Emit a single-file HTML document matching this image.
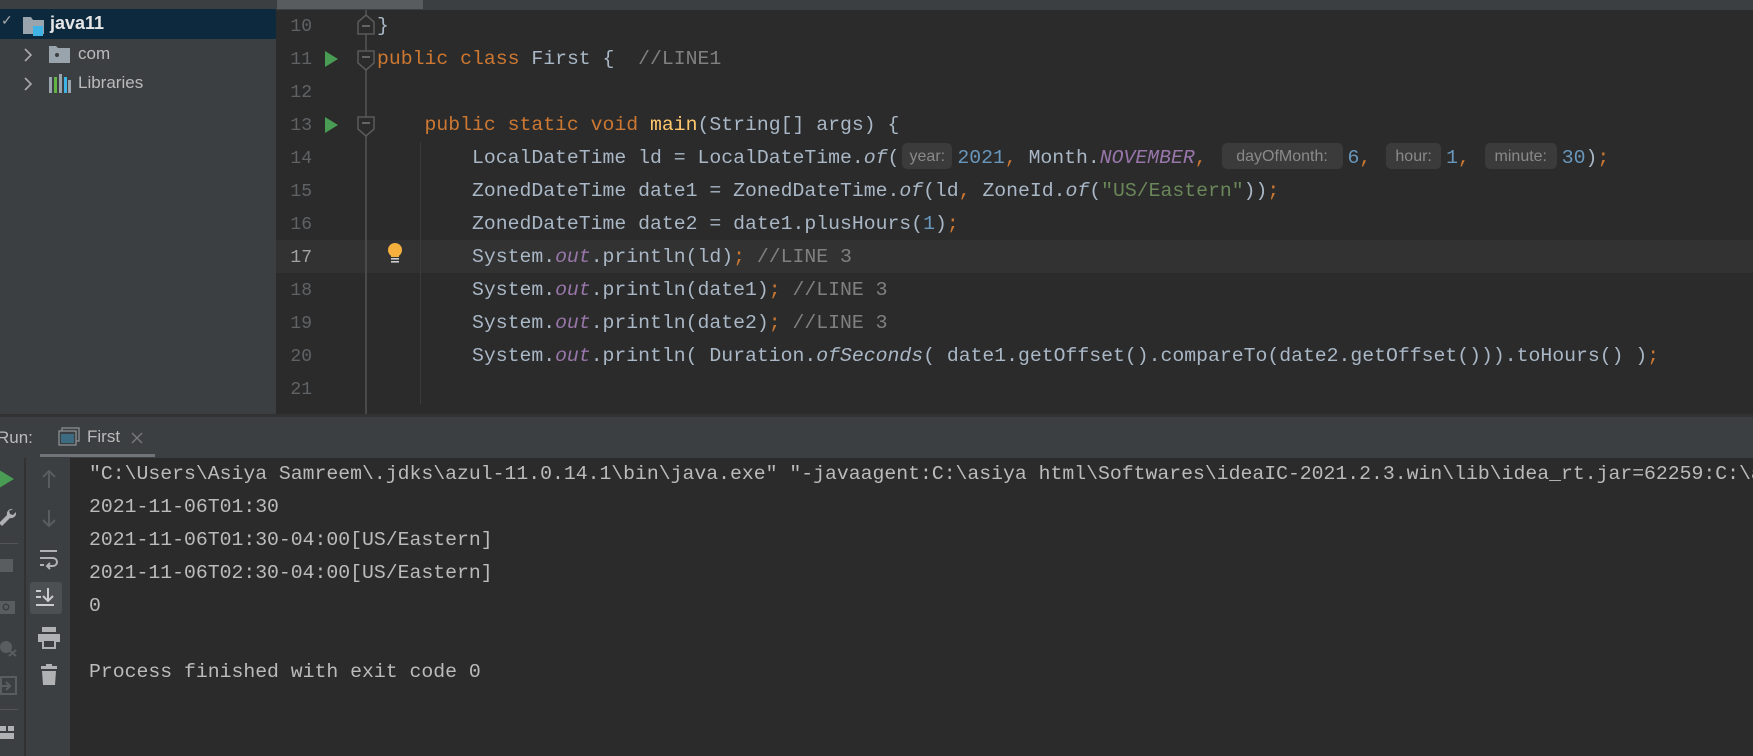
<!DOCTYPE html>
<html><head><meta charset="utf-8"><style>
*{margin:0;padding:0;box-sizing:border-box}
body{width:1753px;height:756px;overflow:hidden;background:#2b2b2b;position:relative;font-family:"Liberation Mono",monospace}
.abs{position:absolute}
.mono{font-family:"Liberation Mono",monospace;font-size:19.8px;white-space:pre;color:#a9b7c6}
.ln{position:absolute;left:276px;width:36px;text-align:right;font-size:18px;color:#606366;font-family:"Liberation Mono",monospace}
.cl{position:absolute;left:377px;height:33px;line-height:33px}
.k{color:#cc7832}.n{color:#6897bb}.s{color:#6a8759}.c{color:#808080}.f{color:#9876aa;font-style:italic}.m{color:#ffc66d}.i{font-style:italic}
.h{display:inline-block;height:26px;line-height:28px;vertical-align:middle;background:#3b3b3b;color:#8a8a8a;border-radius:5px;font-family:"Liberation Sans",sans-serif;font-size:16px;text-align:center;margin:0 5px 0 3px;position:relative;top:-2px}
.side{font-family:"Liberation Sans",sans-serif;font-size:17px;color:#bbbbbb}
</style></head><body>
<div class="abs" style="left:0;top:0;width:1753px;height:10px;background:#3c3f41"></div>
<div class="abs" style="left:277px;top:0;width:146px;height:9px;background:#595c5f"></div>
<div class="abs" style="left:0;top:10px;width:276px;height:405px;background:#3c3f41"></div>
<div class="abs" style="left:0;top:9px;width:276px;height:30px;background:#0d293e"></div>
<div class="abs side" style="left:1px;top:12px;color:#aaa;font-size:14px">✓</div>
<svg class="abs" style="left:22px;top:15px" width="24" height="22"><path d="M1 2h8l2 3h11v14H1z" fill="#9aa4ad"/><rect x="11" y="11" width="10" height="10" fill="#3fb3e6"/></svg>
<div class="abs side" style="left:50px;top:13px;font-weight:bold;color:#e6e6e6;font-size:18px">java11</div>
<svg class="abs" style="left:23px;top:48px" width="10" height="14"><path d="M2 1l6 6-6 6" stroke="#aaa" stroke-width="1.6" fill="none"/></svg>
<svg class="abs" style="left:49px;top:46px" width="22" height="17"><path d="M0 0h7l2 2h12v15H0z" fill="#9aa4ad"/><circle cx="8" cy="9" r="2" fill="#3c3f41"/></svg>
<div class="abs side" style="left:78px;top:44px">com</div>
<svg class="abs" style="left:23px;top:77px" width="10" height="14"><path d="M2 1l6 6-6 6" stroke="#aaa" stroke-width="1.6" fill="none"/></svg>
<svg class="abs" style="left:49px;top:74px" width="22" height="19"><rect x="0" y="3" width="3" height="16" fill="#9aa4ad"/><rect x="5" y="3" width="3" height="16" fill="#62b543"/><rect x="10" y="0" width="3" height="19" fill="#9aa4ad"/><rect x="15" y="3" width="3" height="16" fill="#3fb3e6"/><rect x="19" y="6" width="3" height="13" fill="#9aa4ad"/></svg>
<div class="abs side" style="left:78px;top:73px">Libraries</div>
<div class="abs" style="left:276px;top:240px;width:1477px;height:33px;background:#323232"></div>
<div class="abs" style="left:365px;top:10px;width:2px;height:405px;background:#4a4a4a"></div>
<div class="abs" style="left:420px;top:142px;width:1px;height:262px;background:#3b3b3b"></div>
<svg class="abs" style="left:357px;top:14px" width="18" height="22"><path d="M1 8l8-7 8 7v12H1z" fill="#2b2b2b" stroke="#5a5a5a" stroke-width="1.5"/><path d="M5 12h8" stroke="#777" stroke-width="1.5"/></svg>
<svg class="abs" style="left:357px;top:50px" width="18" height="22"><path d="M1 1h16v12l-8 7-8-7z" fill="#2b2b2b" stroke="#5a5a5a" stroke-width="1.5"/><path d="M5 7h8" stroke="#777" stroke-width="1.5"/></svg>
<svg class="abs" style="left:357px;top:116px" width="18" height="22"><path d="M1 1h16v12l-8 7-8-7z" fill="#2b2b2b" stroke="#5a5a5a" stroke-width="1.5"/><path d="M5 7h8" stroke="#777" stroke-width="1.5"/></svg>
<svg class="abs" style="left:325px;top:51px" width="14" height="16"><path d="M0 0l13 8-13 8z" fill="#499c54"/></svg>
<svg class="abs" style="left:325px;top:117px" width="14" height="16"><path d="M0 0l13 8-13 8z" fill="#499c54"/></svg>
<svg class="abs" style="left:387px;top:243px" width="16" height="22"><circle cx="8" cy="7" r="7" fill="#f4af3d"/><rect x="4" y="10" width="8" height="4" fill="#f4af3d"/><rect x="4" y="15" width="8" height="1.6" fill="#ccc"/><rect x="4" y="18" width="8" height="1.6" fill="#ccc"/></svg>

<div class="ln" style="top:17px">10</div>
<div class="ln" style="top:50px">11</div>
<div class="ln" style="top:83px">12</div>
<div class="ln" style="top:116px">13</div>
<div class="ln" style="top:149px">14</div>
<div class="ln" style="top:182px">15</div>
<div class="ln" style="top:215px">16</div>
<div class="ln" style="top:248px;color:#a4a3a3">17</div>
<div class="ln" style="top:281px">18</div>
<div class="ln" style="top:314px">19</div>
<div class="ln" style="top:347px">20</div>
<div class="ln" style="top:380px">21</div>

<div class="cl mono" style="top:10px">}</div>
<div class="cl mono" style="top:43px"><span class="k">public class </span>First {  <span class="c">//LINE1</span></div>
<div class="cl mono" style="top:109px">    <span class="k">public static void </span><span class="m">main</span>(String[] args) {</div>
<div class="cl mono" style="top:142px">        LocalDateTime ld = LocalDateTime.<span class="i">of</span>(<span class="h" style="width:50px">year:</span><span class="n">2021</span><span class="k">, </span>Month.<span class="f">NOVEMBER</span><span class="k">, </span><span class="h" style="width:121px">dayOfMonth:</span><span class="n">6</span><span class="k">, </span><span class="h" style="width:55px">hour:</span><span class="n">1</span><span class="k">, </span><span class="h" style="width:72px">minute:</span><span class="n">30</span>)<span class="k">;</span></div>
<div class="cl mono" style="top:175px">        ZonedDateTime date1 = ZonedDateTime.<span class="i">of</span>(ld<span class="k">, </span>ZoneId.<span class="i">of</span>(<span class="s">"US/Eastern"</span>))<span class="k">;</span></div>
<div class="cl mono" style="top:208px">        ZonedDateTime date2 = date1.plusHours(<span class="n">1</span>)<span class="k">;</span></div>
<div class="cl mono" style="top:241px">        System.<span class="f">out</span>.println(ld)<span class="k">; </span><span class="c">//LINE 3</span></div>
<div class="cl mono" style="top:274px">        System.<span class="f">out</span>.println(date1)<span class="k">; </span><span class="c">//LINE 3</span></div>
<div class="cl mono" style="top:307px">        System.<span class="f">out</span>.println(date2)<span class="k">; </span><span class="c">//LINE 3</span></div>
<div class="cl mono" style="top:340px">        System.<span class="f">out</span>.println( Duration.<span class="i">ofSeconds</span>( date1.getOffset().compareTo(date2.getOffset())).toHours() )<span class="k">;</span></div>

<div class="abs" style="left:0;top:414px;width:1753px;height:3px;background:#323232"></div>
<div class="abs" style="left:0;top:417px;width:1753px;height:41px;background:#3c3f41"></div>
<div class="abs side" style="left:-3px;top:428px">Run:</div>
<svg class="abs" style="left:58px;top:427px" width="22" height="20"><rect x="4" y="1" width="17" height="13" fill="none" stroke="#8a8f94" stroke-width="1.3"/><rect x="1" y="4" width="17" height="14" fill="#3c3f41" stroke="#8a8f94" stroke-width="1.3"/><rect x="3" y="7" width="13" height="9" fill="#3d6b82"/></svg>
<div class="abs side" style="left:87px;top:427px">First</div>
<svg class="abs" style="left:131px;top:432px" width="12" height="12"><path d="M1 1l10 10M11 1L1 11" stroke="#7a7a7a" stroke-width="1.3"/></svg>
<div class="abs" style="left:40px;top:454px;width:115px;height:3px;background:#6f737a"></div>

<div class="abs" style="left:0;top:458px;width:70px;height:298px;background:#3c3f41"></div>
<div class="abs" style="left:24px;top:458px;width:2px;height:298px;background:#323232"></div>
<svg class="abs" style="left:0;top:468px" width="14" height="22"><path d="M-4 0l18 11-18 11z" fill="#499c54"/></svg>
<svg class="abs" style="left:0;top:507px" width="16" height="20"><path d="M13 2a5 5 0 0 0-6 6l-8 8 3 3 8-8a5 5 0 0 0 6-6l-3 3-3-1-1-3z" fill="#afb1b3"/></svg>
<div class="abs" style="left:0;top:543px;width:18px;height:1px;background:#555"></div>
<div class="abs" style="left:0;top:559px;width:13px;height:13px;background:#5a5d5f"></div>
<svg class="abs" style="left:0;top:597px" width="16" height="20"><rect x="0" y="4" width="15" height="13" fill="#5a5d5f"/><circle cx="6" cy="10" r="3.5" fill="#3c3f41"/><circle cx="6" cy="10" r="2" fill="#5a5d5f"/></svg>
<svg class="abs" style="left:0;top:636px" width="18" height="22"><circle cx="6" cy="11" r="6" fill="#5a5d5f"/><path d="M9 14l7 6M16 14l-7 6" stroke="#5a5d5f" stroke-width="2"/></svg>
<svg class="abs" style="left:0;top:676px" width="18" height="20"><rect x="1" y="1" width="15" height="17" fill="none" stroke="#5a5d5f" stroke-width="2"/><path d="M0 10h9M6 6l4 4-4 4" stroke="#5a5d5f" stroke-width="2" fill="none"/></svg>
<div class="abs" style="left:0;top:709px;width:18px;height:1px;background:#555"></div>
<svg class="abs" style="left:0;top:725px" width="16" height="16"><rect x="0" y="1" width="6" height="5" fill="#afb1b3"/><rect x="8" y="1" width="6" height="5" fill="#afb1b3"/><rect x="0" y="8" width="14" height="6" fill="#afb1b3"/></svg>

<svg class="abs" style="left:42px;top:470px" width="14" height="18"><path d="M7 1v17M1 7l6-6 6 6" stroke="#5a5d5f" stroke-width="2" fill="none"/></svg>
<svg class="abs" style="left:42px;top:510px" width="14" height="18"><path d="M7 0v16M1 10l6 6 6-6" stroke="#5a5d5f" stroke-width="2" fill="none"/></svg>
<svg class="abs" style="left:40px;top:549px" width="18" height="22"><path d="M0 2h17M0 9h13a4 4 0 0 1 0 8H7M10 14l-3 3 3 3M0 16h4" stroke="#afb1b3" stroke-width="2" fill="none"/></svg>
<div class="abs" style="left:30px;top:582px;width:32px;height:32px;background:#4c5052;border-radius:3px"></div>
<svg class="abs" style="left:36px;top:588px" width="20" height="20"><path d="M0 3h5M0 9h5M0 17h18M12 0v12M7 8l5 5 5-5" stroke="#c9cbcd" stroke-width="2" fill="none"/></svg>
<svg class="abs" style="left:38px;top:627px" width="22" height="22"><rect x="4" y="0" width="14" height="5" fill="#afb1b3"/><rect x="0" y="7" width="22" height="8" fill="#afb1b3"/><rect x="5" y="13" width="12" height="8" fill="#3c3f41" stroke="#afb1b3" stroke-width="2"/></svg>
<svg class="abs" style="left:41px;top:664px" width="16" height="22"><rect x="0" y="2" width="16" height="3" fill="#afb1b3"/><rect x="5" y="0" width="6" height="3" fill="#afb1b3"/><path d="M1 7h14l-1 14H2z" fill="#afb1b3"/></svg>

<div class="abs mono" style="left:89px;top:458px;line-height:33px;color:#bbbbbb">"C:\Users\Asiya Samreem\.jdks\azul-11.0.14.1\bin\java.exe" "-javaagent:C:\asiya html\Softwares\ideaIC-2021.2.3.win\lib\idea_rt.jar=62259:C:\asiya
2021-11-06T01:30
2021-11-06T01:30-04:00[US/Eastern]
2021-11-06T02:30-04:00[US/Eastern]
0

Process finished with exit code 0</div>
</body></html>
